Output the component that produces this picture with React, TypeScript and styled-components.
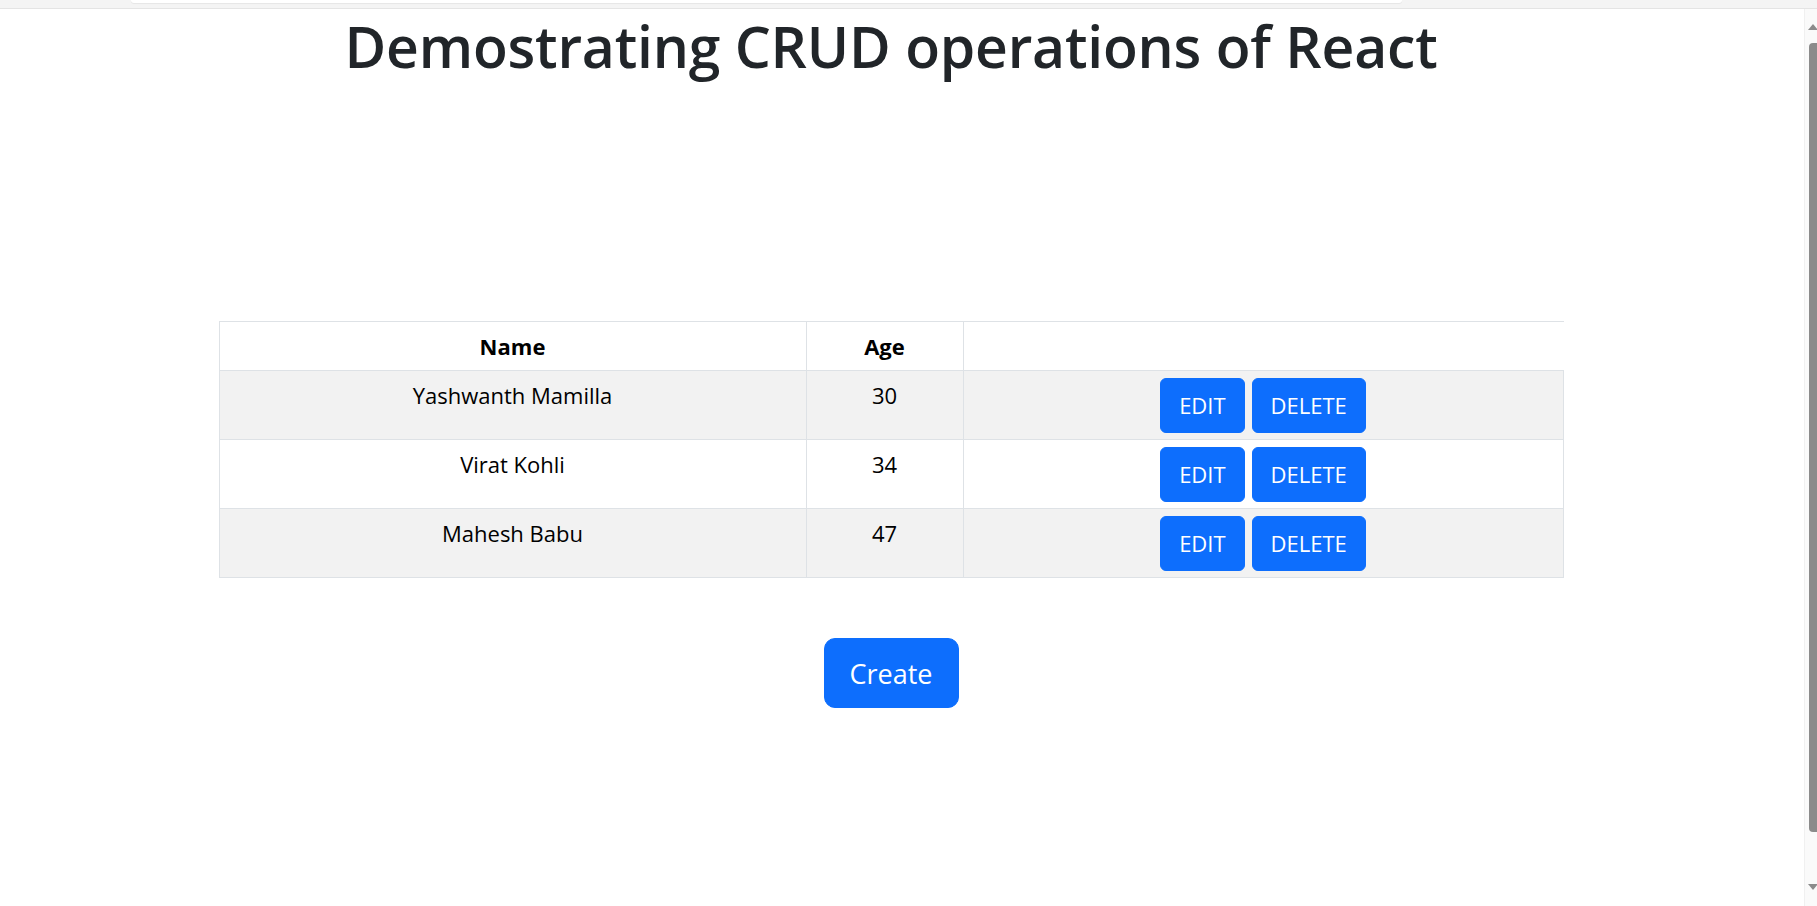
import React from "react";
import styled, { createGlobalStyle } from "styled-components";

const GlobalStyle = createGlobalStyle`
  html, body {
    margin: 0;
    padding: 0;
    background: #ffffff;
    font-family: "Open Sans", "Noto Sans", "Liberation Sans", sans-serif;
    color: #212529;
    overflow: hidden;
  }
  * { box-sizing: border-box; }
`;

const BrowserEdge = styled.div`
  height: 9px;
  background: #f4f4f4;
  border-bottom: 1px solid #e4e4e4;
  padding-left: 131px;
  width: 1817px;
`;

const AddressTail = styled.div`
  width: 1271px;
  height: 3px;
  background: #ffffff;
  border-radius: 0 0 8px 8px;
  box-shadow: 0 1px 1px rgba(0, 0, 0, 0.06);
`;

const Page = styled.main`
  width: 1782px;
  display: flex;
  flex-direction: column;
  align-items: center;
`;

const Title = styled.h1`
  margin: 3px 0 241px;
  font-size: 57px;
  line-height: 68px;
  font-weight: 600;
  letter-spacing: -0.2px;
  color: #212529;
  text-align: center;
`;

const Table = styled.table`
  width: 1344px;
  border-collapse: collapse;
  table-layout: fixed;
  color: #000;
  font-size: 22px;
  line-height: 34px;
  vertical-align: top;
`;

const HeadCell = styled.th<{ $open?: boolean }>`
  border: 1px solid #dee2e6;
  border-right-color: ${(p) => (p.$open ? "transparent" : "#dee2e6")};
  padding: 7px 6px;
  font-weight: 700;
  text-align: center;
  background: #ffffff;
`;

const Row = styled.tr<{ $striped: boolean }>`
  background: ${(p) => (p.$striped ? "#f2f2f2" : "#ffffff")};
`;

const Cell = styled.td`
  border: 1px solid #dee2e6;
  padding: 6.5px 6px;
  text-align: center;
  vertical-align: top;
`;

const Actions = styled.div`
  display: flex;
  justify-content: center;
  gap: 7px;
`;

const Button = styled.button<{ $size?: "lg" }>`
  font-family: inherit;
  background: #0d6efd;
  color: #ffffff;
  border: 1px solid #0d6efd;
  border-radius: ${(p) => (p.$size === "lg" ? "11px" : "6px")};
  font-size: ${(p) => (p.$size === "lg" ? "27px" : "22px")};
  line-height: ${(p) => (p.$size === "lg" ? "41px" : "34px")};
  padding: ${(p) => (p.$size === "lg" ? "13.5px 25px" : "9.5px 18px")};
  font-weight: 400;
  cursor: pointer;
`;

const CreateWrap = styled.div`
  margin-top: 60px;
`;

const FauxScrollbar = styled.aside`
  position: fixed;
  top: 9px;
  right: 0;
  bottom: 0;
  width: 13px;
  background: #fafafa;
  border-left: 1px solid #f0f0f0;
`;

const Thumb = styled.div`
  position: absolute;
  top: 34px;
  left: 4px;
  right: 0;
  height: 789px;
  background: #8b8b8b;
  border-radius: 4px 0 0 4px;
`;

const Arrow = styled.svg<{ $down?: boolean }>`
  position: absolute;
  left: 3px;
  ${(p) => (p.$down ? "bottom: 16px;" : "top: 15px;")}
`;

const rows = [
  { name: "Yashwanth Mamilla", age: 30 },
  { name: "Virat Kohli", age: 34 },
  { name: "Mahesh Babu", age: 47 },
];

export default function App() {
  return (
    <>
      <GlobalStyle />
      <BrowserEdge>
        <AddressTail />
      </BrowserEdge>
      <Page>
        <Title>Demostrating CRUD operations of React</Title>
        <Table>
          <colgroup>
            <col style={{ width: 587 }} />
            <col style={{ width: 157 }} />
            <col style={{ width: 600 }} />
          </colgroup>
          <thead>
            <tr>
              <HeadCell>Name</HeadCell>
              <HeadCell>Age</HeadCell>
              <HeadCell $open />
            </tr>
          </thead>
          <tbody>
            {rows.map((r, i) => (
              <Row key={r.name} $striped={i % 2 === 0}>
                <Cell>{r.name}</Cell>
                <Cell>{r.age}</Cell>
                <Cell>
                  <Actions>
                    <Button>EDIT</Button>
                    <Button>DELETE</Button>
                  </Actions>
                </Cell>
              </Row>
            ))}
          </tbody>
        </Table>
        <CreateWrap>
          <Button $size="lg">Create</Button>
        </CreateWrap>
      </Page>
      <FauxScrollbar>
        <Arrow width="10" height="6" viewBox="0 0 10 6">
          <path d="M0 6 L5 0 L10 6 Z" fill="#8b8b8b" />
        </Arrow>
        <Thumb />
        <Arrow $down width="10" height="6" viewBox="0 0 10 6">
          <path d="M0 0 L5 6 L10 0 Z" fill="#8b8b8b" />
        </Arrow>
      </FauxScrollbar>
    </>
  );
}
